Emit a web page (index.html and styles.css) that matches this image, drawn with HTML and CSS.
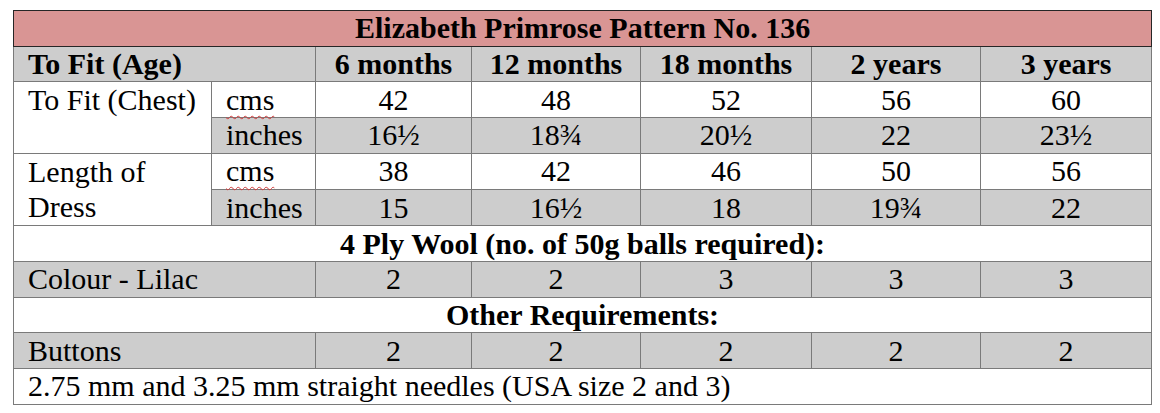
FILE: index.html
```html
<!DOCTYPE html>
<html lang="en">
<head>
<meta charset="utf-8">
<title>Elizabeth Primrose Pattern No. 136</title>
<link rel="stylesheet" href="styles.css">
</head>
<body>
<div class="page">
<table class="pattern">
  <colgroup>
    <col class="c-label">
    <col class="c-unit">
    <col class="c-s1">
    <col class="c-s2">
    <col class="c-s3">
    <col class="c-s4">
    <col class="c-s5">
  </colgroup>
  <tr class="title"><td colspan="7">Elizabeth Primrose Pattern No. 136</td></tr>
  <tr class="shade head">
    <td colspan="2" class="left">To Fit (Age)</td>
    <td>6 months</td><td>12 months</td><td>18 months</td><td>2 years</td><td>3 years</td>
  </tr>
  <tr>
    <td rowspan="2" class="left top">To Fit (Chest)</td>
    <td class="left"><span class="spell">cms</span></td>
    <td>42</td><td>48</td><td>52</td><td>56</td><td>60</td>
  </tr>
  <tr class="shade">
    <td class="left">inches</td>
    <td>16½</td><td>18¾</td><td>20½</td><td>22</td><td>23½</td>
  </tr>
  <tr>
    <td rowspan="2" class="left top">Length of<br>Dress</td>
    <td class="left"><span class="spell">cms</span></td>
    <td>38</td><td>42</td><td>46</td><td>50</td><td>56</td>
  </tr>
  <tr class="shade">
    <td class="left">inches</td>
    <td>15</td><td>16½</td><td>18</td><td>19¾</td><td>22</td>
  </tr>
  <tr class="section"><td colspan="7">4 Ply Wool (no. of 50g balls required):</td></tr>
  <tr class="shade">
    <td colspan="2" class="left">Colour - Lilac</td>
    <td>2</td><td>2</td><td>3</td><td>3</td><td>3</td>
  </tr>
  <tr class="section"><td colspan="7">Other Requirements:</td></tr>
  <tr class="shade">
    <td colspan="2" class="left">Buttons</td>
    <td>2</td><td>2</td><td>2</td><td>2</td><td>2</td>
  </tr>
  <tr><td colspan="7" class="left">2.75 mm and 3.25 mm straight needles (USA size 2 and 3)</td></tr>
</table>
</div>
</body>
</html>
```

FILE: styles.css
```css
html, body {
  margin: 0;
  padding: 0;
  background: #ffffff;
}

.page {
  padding: 10px 0 0 13px;
}

.pattern {
  border-collapse: collapse;
  table-layout: fixed;
  width: 1138px;
  font-family: "Liberation Serif", "Times New Roman", serif;
  font-size: 30px;
  color: #000;
}

.c-label { width: 198px; }
.c-unit { width: 104px; }
.c-s1 { width: 156px; }
.c-s2 { width: 169px; }
.c-s3 { width: 171px; }
.c-s4 { width: 169px; }
.c-s5 { width: 171px; }

.pattern tr {
  height: 35.7px;
}

.pattern td {
  border: 1px solid #7a7a7a;
  padding: 0 14px;
  line-height: 34px;
  text-align: center;
  vertical-align: middle;
  white-space: nowrap;
}

.pattern td.left {
  text-align: left;
}

.pattern td.top {
  vertical-align: top;
  line-height: 35.7px;
  white-space: normal;
}

.pattern tr.shade td {
  background: #cdcdcd;
}

.pattern tr.shade td.top {
  background: #ffffff;
}

.pattern tr.title td {
  background: #d99594;
  font-weight: bold;
  border: 1px solid #262626;
}

.pattern tr.head td,
.pattern tr.section td {
  font-weight: bold;
}

.spell {
  text-decoration: underline wavy #d23a3a;
  text-decoration-thickness: 1px;
  text-underline-offset: 5px;
}
```
